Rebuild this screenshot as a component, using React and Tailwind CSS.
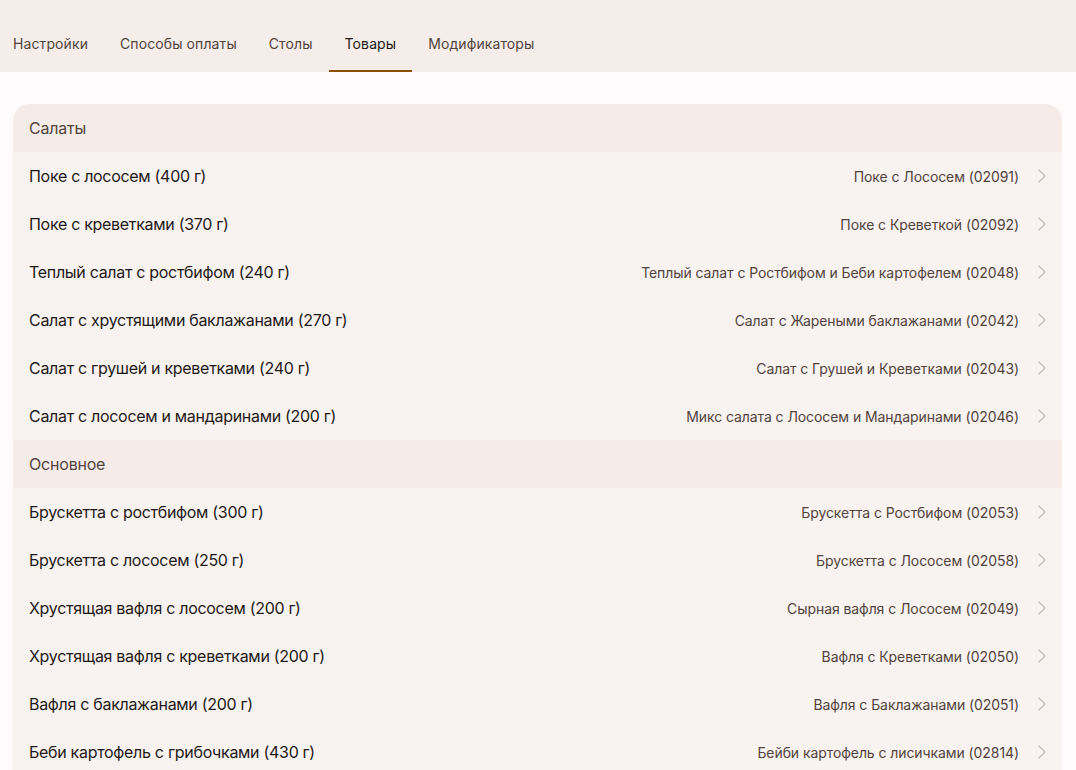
import React from "react";

const tabs = ["Настройки", "Способы оплаты", "Столы", "Товары", "Модификаторы"];

const sections = [
  {
    title: "Салаты",
    items: [
      ["Поке с лососем (400 г)", "Поке с Лососем (02091)"],
      ["Поке с креветками (370 г)", "Поке с Креветкой (02092)"],
      ["Теплый салат с ростбифом (240 г)", "Теплый салат с Ростбифом и Беби картофелем (02048)"],
      ["Салат с хрустящими баклажанами (270 г)", "Салат с Жареными баклажанами (02042)"],
      ["Салат с грушей и креветками (240 г)", "Салат с Грушей и Креветками (02043)"],
      ["Салат с лососем и мандаринами (200 г)", "Микс салата с Лососем и Мандаринами (02046)"],
    ],
  },
  {
    title: "Основное",
    items: [
      ["Брускетта с ростбифом (300 г)", "Брускетта с Ростбифом (02053)"],
      ["Брускетта с лососем (250 г)", "Брускетта с Лососем (02058)"],
      ["Хрустящая вафля с лососем (200 г)", "Сырная вафля с Лососем (02049)"],
      ["Хрустящая вафля с креветками (200 г)", "Вафля с Креветками (02050)"],
      ["Вафля с баклажанами (200 г)", "Вафля с Баклажанами (02051)"],
      ["Беби картофель с грибочками (430 г)", "Бейби картофель с лисичками (02814)"],
    ],
  },
];

const Chevron = () => (
  <svg width="8" height="14" viewBox="0 0 8 14" fill="none" className="shrink-0">
    <polyline
      points="1,1 7,7 1,13"
      stroke="#c6bdb8"
      strokeWidth="1.4"
      strokeLinecap="round"
      strokeLinejoin="round"
    />
  </svg>
);

export default function App() {
  return (
    <div
      className="h-[770px] overflow-hidden bg-[#fffbfc]"
      style={{ fontFamily: "Inter, 'Noto Sans', sans-serif" }}
    >
      <div className="h-[72px] bg-[#f5ede9] flex items-end">
        <div className="flex ml-[-3px]">
          {tabs.map((t) => {
            const active = t === "Товары";
            return (
              <div
                key={t}
                className={`px-4 h-[56px] flex items-center text-[14px] tracking-[0.1px] border-b-[2px] ${
                  active
                    ? "border-[#8b5000] text-[#1f1a17]"
                    : "border-transparent text-[#52443d]"
                }`}
              >
                <span>{t}</span>
              </div>
            );
          })}
        </div>
      </div>
      <div className="pl-[13px] pt-8 pr-[14px]">
        <div className="rounded-t-[16px] overflow-hidden">
          {sections.map((s) => (
            <div key={s.title}>
              <div className="h-12 flex items-center px-4 bg-[#f5ece9] text-[16px] tracking-[-0.2px] text-[#52443d]">
                {s.title}
              </div>
              {s.items.map(([name, code]) => (
                <div
                  key={name}
                  className="h-12 flex items-center justify-between pl-4 pr-4 bg-[#f8f2f0]"
                >
                  <span className="text-[16px] tracking-[-0.3px] text-[#1f1a17]">{name}</span>
                  <div className="flex items-center gap-[19px]">
                    <span className="text-[14px] tracking-[-0.08px] text-[#52443d]">{code}</span>
                    <Chevron />
                  </div>
                </div>
              ))}
            </div>
          ))}
        </div>
      </div>
    </div>
  );
}
